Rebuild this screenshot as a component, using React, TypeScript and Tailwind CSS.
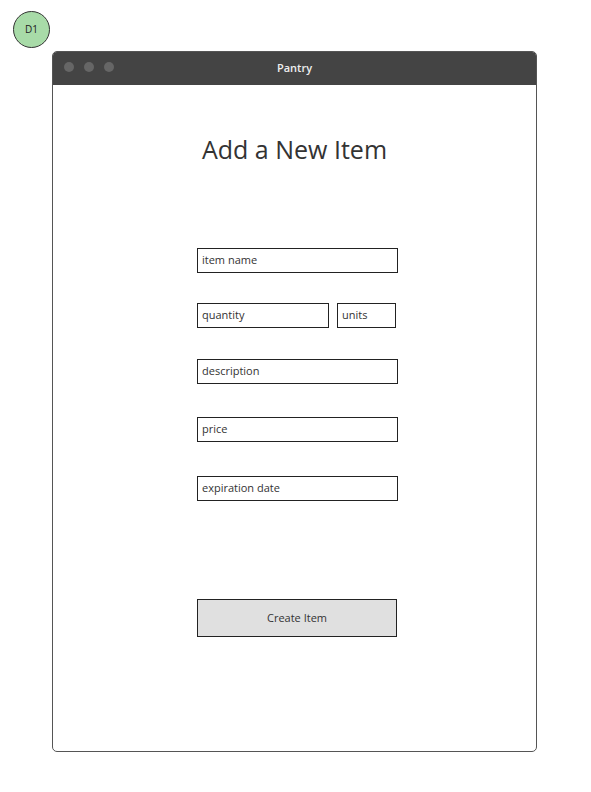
import React from 'react'

const font = { fontFamily: '"Open Sans", "Noto Sans", sans-serif' }

const Field = ({ label, className }: { label: string; className: string }) => {
    return (
        <div
            className={`flex h-[25px] items-center border border-[#222] bg-white pl-[4px] text-[11px] text-[#333] ${className}`}
        >
            {label}
        </div>
    )
}

export default function App() {
    return (
        <div className="relative h-[792px] w-[591px] bg-white" style={font}>
            <div className="absolute top-[11px] left-[13px] flex h-[37px] w-[37px] items-center justify-center rounded-full border border-[#333] bg-[#a8dba8] text-[10px] text-[#222]">
                D1
            </div>
            <div className="pt-[51px] pl-[52px]">
                <div className="flex h-[701px] w-[485px] flex-col overflow-hidden rounded-[5px] border border-[#555]">
                    <div className="relative flex h-[33px] items-center justify-center bg-[#444]">
                        <div className="absolute top-[10px] left-[11px] flex gap-[10px]">
                            <span className="h-[10px] w-[10px] rounded-full bg-[#666]" />
                            <span className="h-[10px] w-[10px] rounded-full bg-[#666]" />
                            <span className="h-[10px] w-[10px] rounded-full bg-[#666]" />
                        </div>
                        <span className="text-[11px] font-semibold text-[#eee]">Pantry</span>
                    </div>
                    <div className="flex flex-col">
                        <h1 className="mt-[45px] h-[38px] text-center text-[25px] leading-[38px] font-normal text-[#333]">
                            Add a New Item
                        </h1>
                        <div className="ml-[144px] flex w-[201px] flex-col">
                            <Field label="item name" className="mt-[80px] w-[201px]" />
                            <div className="mt-[30px] flex gap-[8px]">
                                <Field label="quantity" className="w-[132px]" />
                                <Field label="units" className="w-[59px]" />
                            </div>
                            <Field label="description" className="mt-[31px] w-[201px]" />
                            <Field label="price" className="mt-[33px] w-[201px]" />
                            <Field label="expiration date" className="mt-[34px] w-[201px]" />
                            <button className="mt-[98px] flex h-[38px] w-[200px] items-center justify-center border border-[#222] bg-[#e0e0e0] text-[11px] text-[#333]">
                                Create Item
                            </button>
                        </div>
                    </div>
                </div>
            </div>
        </div>
    )
}
